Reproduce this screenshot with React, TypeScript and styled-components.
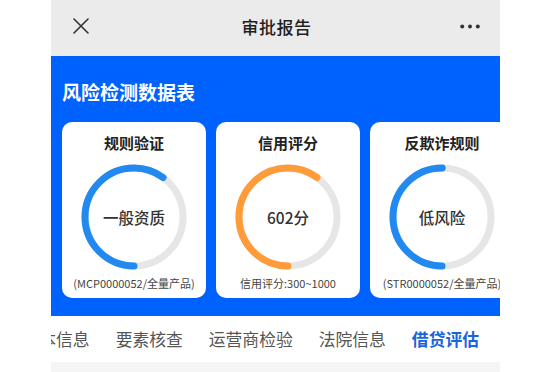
import React from "react";
import styled, { createGlobalStyle } from "styled-components";

const Global = createGlobalStyle`
  html, body { margin: 0; padding: 0; background: #ffffff; }
  body { font-family: "Noto Sans CJK SC", "Noto Sans", sans-serif; }
`;

const Phone = styled.div`
  margin-left: 51px;
  width: 449px;
  overflow: hidden;
  background: #f5f5f5;
  min-height: 372px;
`;

const NavBar = styled.div`
  height: 56px;
  background: #ebebeb;
  display: grid;
  grid-template-columns: 1fr auto 1fr;
  align-items: center;
  padding: 0 20px 0 22px;
`;

const NavTitle = styled.div`
  font-size: 17px;
  font-weight: 500;
  color: #1f1f1f;
  letter-spacing: 0.5px;
  margin-top: -3px;
`;

const IconBtn = styled.div<{ $end?: boolean }>`
  display: flex;
  justify-content: ${(p) => (p.$end ? "flex-end" : "flex-start")};
  align-items: center;
  margin-top: -4px;
`;

const BlueSection = styled.section`
  background: #0062fe;
  padding: 24px 0 18px;
`;

const SectionTitle = styled.h2`
  margin: 0 0 18px 11px;
  font-size: 19px;
  line-height: 24px;
  font-weight: 700;
  color: #ffffff;
`;

const CardRow = styled.div`
  display: flex;
  gap: 10px;
  padding-left: 11px;
`;

const Card = styled.div`
  flex: 0 0 144px;
  height: 176px;
  box-sizing: border-box;
  background: #ffffff;
  border-radius: 10px;
  padding-top: 12px;
  display: flex;
  flex-direction: column;
  align-items: center;
`;

const CardTitle = styled.div`
  font-size: 15px;
  line-height: 18px;
  font-weight: 700;
  color: #222;
`;

const Ring = styled.div`
  position: relative;
  width: 106px;
  height: 106px;
  margin-top: 12px;
  display: flex;
  align-items: center;
  justify-content: center;
`;

const RingSvg = styled.svg`
  position: absolute;
  inset: 0;
`;

const RingLabel = styled.div`
  font-size: 15.5px;
  font-weight: 500;
  color: #333;
`;

const CardNote = styled.div`
  margin-top: 6px;
  font-size: 11px;
  line-height: 14px;
  color: #444;
  white-space: nowrap;
`;

const Tabs = styled.nav`
  height: 46px;
  background: #ffffff;
  display: flex;
  justify-content: flex-end;
  align-items: center;
  gap: 26px;
  padding-right: 21px;
  overflow: hidden;
`;

const Tab = styled.div<{ $active?: boolean }>`
  flex-shrink: 0;
  font-size: 16.8px;
  white-space: nowrap;
  color: ${(p) => (p.$active ? "#1a64dc" : "#555")};
  font-weight: ${(p) => (p.$active ? 700 : 400)};
`;

const R = 49;
const C = 2 * Math.PI * R;

function Gauge({ pct, color, label }: { pct: number; color: string; label: string }) {
  return (
    <Ring>
      <RingSvg width="106" height="106" viewBox="0 0 106 106">
        <circle cx="53" cy="53" r={R} fill="none" stroke="#e6e6e6" strokeWidth="7" />
        <circle
          cx="53"
          cy="53"
          r={R}
          fill="none"
          stroke={color}
          strokeWidth="7"
          strokeLinecap="round"
          strokeDasharray={`${pct * C} ${C}`}
          transform="rotate(90 53 53)"
        />
      </RingSvg>
      <RingLabel>{label}</RingLabel>
    </Ring>
  );
}

const cards = [
  { title: "规则验证", label: "一般资质", note: "(MCP0000052/全量产品)", pct: 0.6, color: "#2189f0" },
  { title: "信用评分", label: "602分", note: "信用评分:300~1000", pct: 0.6, color: "#ff9b38" },
  { title: "反欺诈规则", label: "低风险", note: "(STR0000052/全量产品)", pct: 0.5, color: "#2189f0" },
];

const tabs = ["基本信息", "要素核查", "运营商检验", "法院信息", "借贷评估"];

export default function App() {
  return (
    <>
      <Global />
      <Phone>
        <NavBar>
          <IconBtn>
            <svg width="16" height="16" viewBox="0 0 16 16">
              <path d="M1 1 L15 15 M15 1 L1 15" stroke="#333" strokeWidth="1.6" strokeLinecap="round" />
            </svg>
          </IconBtn>
          <NavTitle>审批报告</NavTitle>
          <IconBtn $end>
            <svg width="20" height="5" viewBox="0 0 20 5">
              <circle cx="2.2" cy="2.5" r="2" fill="#333" />
              <circle cx="10" cy="2.5" r="2" fill="#333" />
              <circle cx="17.8" cy="2.5" r="2" fill="#333" />
            </svg>
          </IconBtn>
        </NavBar>
        <BlueSection>
          <SectionTitle>风险检测数据表</SectionTitle>
          <CardRow>
            {cards.map((c) => (
              <Card key={c.title}>
                <CardTitle>{c.title}</CardTitle>
                <Gauge pct={c.pct} color={c.color} label={c.label} />
                <CardNote>{c.note}</CardNote>
              </Card>
            ))}
          </CardRow>
        </BlueSection>
        <Tabs>
          {tabs.map((t, i) => (
            <Tab key={t} $active={i === tabs.length - 1}>
              {t}
            </Tab>
          ))}
        </Tabs>
      </Phone>
    </>
  );
}
